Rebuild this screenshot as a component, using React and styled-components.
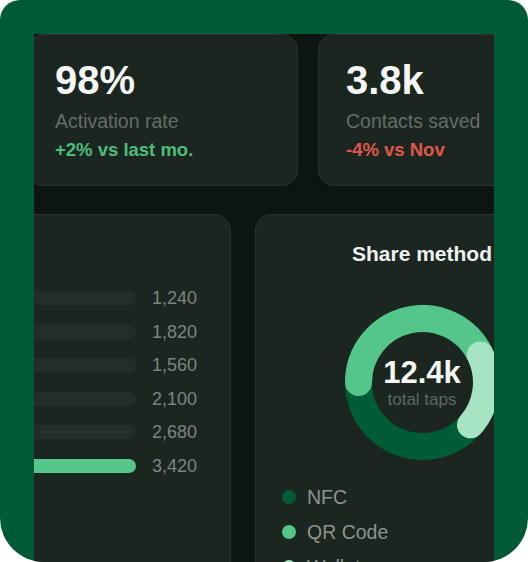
import React from 'react';
import styled, { createGlobalStyle } from 'styled-components';

const GlobalStyle = createGlobalStyle`
  html, body {
    margin: 0;
    background: #ffffff;
  }
  body {
    font-family: 'Liberation Sans', Arial, Helvetica, sans-serif;
  }
`;

const Frame = styled.div`
  width: 528px;
  height: 562px;
  box-sizing: border-box;
  padding: 34px 34px 0;
  background: #005a36;
  border-radius: 20px 20px 44px 44px;
  overflow: hidden;
`;

const Screen = styled.div`
  height: 100%;
  background: #0d1512;
  overflow: hidden;
`;

// the dashboard is wider than the screen; we see it scrolled sideways
const Dashboard = styled.div`
  width: 760px;
  margin-left: -205px;
  display: flex;
  flex-direction: column;
  align-items: flex-end;
  gap: 28px;
`;

const Row = styled.div`
  display: flex;
  gap: ${(p) => p.$gap}px;
`;

const Card = styled.div`
  box-sizing: border-box;
  background: #1c2620;
  border: 1px solid #29332d;
  border-radius: 16px;
`;

const StatCard = styled(Card)`
  width: 271px;
  height: 152px;
  padding: 22px 27px;
`;

const StatValue = styled.div`
  font-size: 40px;
  line-height: 46px;
  font-weight: 700;
  color: #f4f6f5;
`;

const StatLabel = styled.div`
  margin-top: 6px;
  font-size: 19.5px;
  line-height: 24px;
  color: #646d69;
`;

const StatChange = styled.div`
  margin-top: 6px;
  font-size: 18.5px;
  line-height: 22px;
  font-weight: 700;
  color: ${(p) => (p.$down ? '#e0564c' : '#4dbd7c')};
`;

const PanelCard = styled(Card)`
  width: ${(p) => p.$width}px;
  height: 380px;
  padding: 27px 26px;
`;

const PanelTitle = styled.div`
  font-size: 21px;
  line-height: 24px;
  font-weight: 700;
  color: #eef1ef;
  text-align: center;
`;

const BarList = styled.div`
  margin-top: 45px;
  display: flex;
  flex-direction: column;
  gap: 11.6px;
`;

const BarRow = styled.div`
  display: flex;
  align-items: center;
  gap: 16px;
  height: 22px;
`;

const Bar = styled.div`
  flex: 1;
  height: 14px;
  border-radius: 7px;
  background: ${(p) => (p.$active ? '#55c68a' : '#242e29')};
`;

const BarValue = styled.span`
  width: 52px;
  font-size: 18px;
  line-height: 22px;
  color: #7b8480;
`;

const DonutWrap = styled.div`
  position: relative;
  width: 155px;
  height: 155px;
  margin: 39px auto 0;
`;

const DonutCenter = styled.div`
  position: absolute;
  inset: 0;
  display: flex;
  flex-direction: column;
  align-items: center;
  justify-content: center;
`;

const DonutValue = styled.div`
  font-size: 31px;
  line-height: 34px;
  font-weight: 700;
  color: #f4f6f5;
`;

const DonutLabel = styled.div`
  font-size: 17px;
  line-height: 20px;
  color: #5d6763;
`;

const Legend = styled.div`
  margin-top: 25px;
  display: flex;
  flex-direction: column;
  gap: 11px;
`;

const LegendItem = styled.div`
  display: flex;
  align-items: center;
  gap: 11px;
  font-size: 19.5px;
  line-height: 24px;
  color: #8b9490;
`;

const Dot = styled.span`
  width: 14px;
  height: 14px;
  border-radius: 50%;
  background: ${(p) => p.$color};
`;

const taps = [1240, 1820, 1560, 2100, 2680, 3420];

const methods = [
  ['NFC', '#005c37'],
  ['QR Code', '#55c68a'],
  ['Wallet', '#a6e4c3'],
];

function Donut() {
  return (
    <DonutWrap>
      <svg width="155" height="155" viewBox="0 0 155 155">
        <circle cx="77.5" cy="77.5" r="64" fill="none" stroke="#005c37" strokeWidth="27" />
        <path
          d="M 13.5 77.5 A 64 64 0 0 1 135.31 50.05"
          fill="none"
          stroke="#55c68a"
          strokeWidth="27"
          strokeLinecap="round"
        />
        <path
          d="M 135.31 50.05 A 64 64 0 0 1 125.51 119.82"
          fill="none"
          stroke="#a6e4c3"
          strokeWidth="27"
          strokeLinecap="round"
        />
      </svg>
      <DonutCenter>
        <DonutValue>12.4k</DonutValue>
        <DonutLabel>total taps</DonutLabel>
      </DonutCenter>
    </DonutWrap>
  );
}

export default function App() {
  const max = Math.max(...taps);

  return (
    <>
      <GlobalStyle />
      <Frame>
        <Screen>
          <Dashboard>
            <Row $gap={20}>
              <StatCard>
                <StatValue>98%</StatValue>
                <StatLabel>Activation rate</StatLabel>
                <StatChange>+2% vs last mo.</StatChange>
              </StatCard>
              <StatCard>
                <StatValue>3.8k</StatValue>
                <StatLabel>Contacts saved</StatLabel>
                <StatChange $down>-4% vs Nov</StatChange>
              </StatCard>
            </Row>
            <Row $gap={24}>
              <PanelCard $width={400}>
                <BarList>
                  {taps.map((v) => (
                    <BarRow key={v}>
                      <Bar $active={v === max} />
                      <BarValue>{v.toLocaleString('en-US')}</BarValue>
                    </BarRow>
                  ))}
                </BarList>
              </PanelCard>
              <PanelCard $width={334}>
                <PanelTitle>Share method</PanelTitle>
                <Donut />
                <Legend>
                  {methods.map(([name, color]) => (
                    <LegendItem key={name}>
                      <Dot $color={color} />
                      {name}
                    </LegendItem>
                  ))}
                </Legend>
              </PanelCard>
            </Row>
          </Dashboard>
        </Screen>
      </Frame>
    </>
  );
}
